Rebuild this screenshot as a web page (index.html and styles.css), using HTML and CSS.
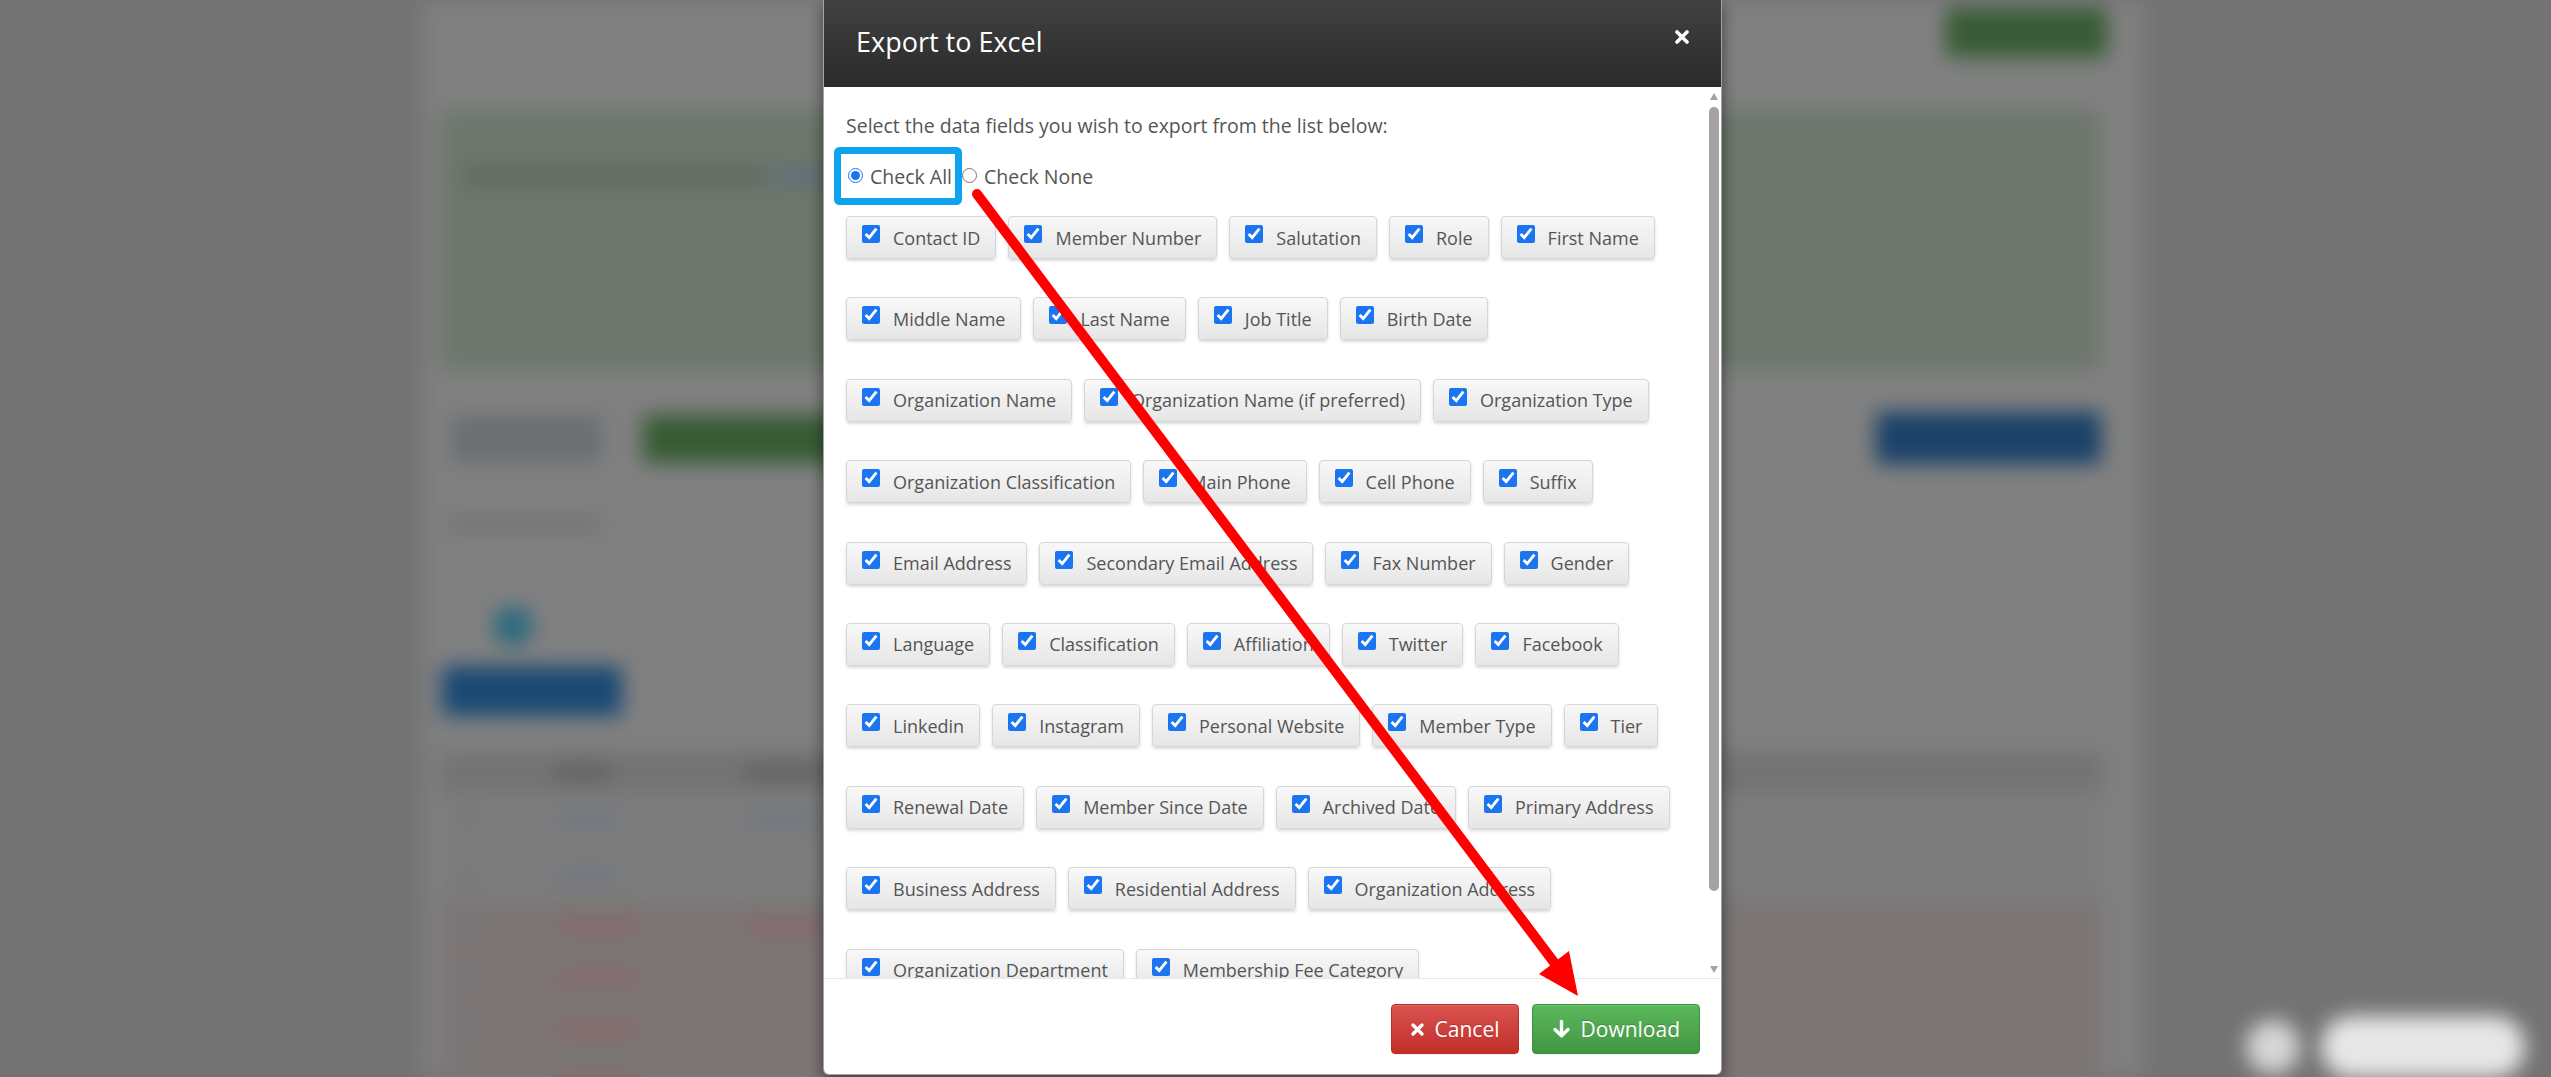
FILE: index.html
```html
<!DOCTYPE html>
<html lang="en">
<head>
    <meta charset="UTF-8">
    <meta name="viewport" content="width=device-width, initial-scale=1.0">
    <title>Export to Excel</title>
    <link rel="stylesheet" href="styles.css">
</head>
<body>
    <!-- page behind the dialog, blurred -->
    <div class="page">
        <div class="page-inner">
            <div class="top-bar"><span class="blob btn-green"></span></div>

            <div class="notice">
                <div class="notice-text">
                    <span class="blob text-dark"></span>
                    <span class="blob text-link"></span>
                </div>
                <div class="blob bar-blue bar-wide"></div>
                <div class="blob bar-blue bar-short"></div>
            </div>

            <div class="action-row">
                <span class="blob btn-grey"></span>
                <span class="blob btn-green btn-long"></span>
                <span class="blob btn-blue btn-right"></span>
            </div>

            <div class="blob small-text"></div>

            <div class="tabs"><span class="blob tab-dot"></span></div>
            <div class="blob btn-blue tab-btn"></div>

            <div class="table">
                <div class="row head">
                    <span></span>
                    <span class="blob cell-head"></span>
                    <span class="blob cell-head wide"></span>
                </div>
                <div class="row tall">
                    <span class="blob cell-id"></span>
                    <span class="blob cell-link"></span>
                    <span class="blob cell-link wide"></span>
                </div>
                <div class="row">
                    <span class="blob cell-id"></span>
                    <span class="blob cell-link"></span>
                    <span></span>
                </div>
                <div class="row danger">
                    <span class="blob cell-id"></span>
                    <span class="blob cell-red"></span>
                    <span class="blob cell-red wide"></span>
                </div>
                <div class="row danger">
                    <span class="blob cell-id"></span>
                    <span class="blob cell-red"></span>
                    <span></span>
                </div>
                <div class="row danger">
                    <span class="blob cell-id"></span>
                    <span class="blob cell-red"></span>
                    <span></span>
                </div>
                <div class="row danger">
                    <span class="blob cell-id"></span>
                    <span class="blob cell-red"></span>
                    <span></span>
                </div>
            </div>
        </div>

        <div class="chat-widget">
            <span class="chat-dot"></span>
            <span class="chat-pill"></span>
        </div>
    </div>

    <!-- export dialog -->
    <div class="modal">
        <div class="modal-header">
            <h3 class="modal-title">Export to Excel</h3>
            <button class="close" type="button">
                <svg width="14" height="14" viewBox="0 0 14 14"><path d="M2 2L12 12M12 2L2 12" stroke="#fff" stroke-width="3.6" stroke-linecap="round"/></svg>
            </button>
        </div>

        <div class="modal-main">
            <div class="modal-body">
                <p class="intro">Select the data fields you wish to export from the list below:</p>
                <div class="select-all">
                    <label><input type="radio" name="checkall" checked>Check All</label>
                    <label><input type="radio" name="checkall">Check None</label>
                </div>

                <div class="field-list">
                    <label class="field"><input type="checkbox" checked><span>Contact ID</span></label>
                    <label class="field"><input type="checkbox" checked><span>Member Number</span></label>
                    <label class="field"><input type="checkbox" checked><span>Salutation</span></label>
                    <label class="field"><input type="checkbox" checked><span>Role</span></label>
                    <label class="field"><input type="checkbox" checked><span>First Name</span></label>
                    <label class="field"><input type="checkbox" checked><span>Middle Name</span></label>
                    <label class="field"><input type="checkbox" checked><span>Last Name</span></label>
                    <label class="field"><input type="checkbox" checked><span>Job Title</span></label>
                    <label class="field"><input type="checkbox" checked><span>Birth Date</span></label>
                    <label class="field"><input type="checkbox" checked><span>Organization Name</span></label>
                    <label class="field"><input type="checkbox" checked><span>Organization Name (if preferred)</span></label>
                    <label class="field"><input type="checkbox" checked><span>Organization Type</span></label>
                    <label class="field"><input type="checkbox" checked><span>Organization Classification</span></label>
                    <label class="field"><input type="checkbox" checked><span>Main Phone</span></label>
                    <label class="field"><input type="checkbox" checked><span>Cell Phone</span></label>
                    <label class="field"><input type="checkbox" checked><span>Suffix</span></label>
                    <label class="field"><input type="checkbox" checked><span>Email Address</span></label>
                    <label class="field"><input type="checkbox" checked><span>Secondary Email Address</span></label>
                    <label class="field"><input type="checkbox" checked><span>Fax Number</span></label>
                    <label class="field"><input type="checkbox" checked><span>Gender</span></label>
                    <label class="field"><input type="checkbox" checked><span>Language</span></label>
                    <label class="field"><input type="checkbox" checked><span>Classification</span></label>
                    <label class="field"><input type="checkbox" checked><span>Affiliation</span></label>
                    <label class="field"><input type="checkbox" checked><span>Twitter</span></label>
                    <label class="field"><input type="checkbox" checked><span>Facebook</span></label>
                    <label class="field"><input type="checkbox" checked><span>Linkedin</span></label>
                    <label class="field"><input type="checkbox" checked><span>Instagram</span></label>
                    <label class="field"><input type="checkbox" checked><span>Personal Website</span></label>
                    <label class="field"><input type="checkbox" checked><span>Member Type</span></label>
                    <label class="field"><input type="checkbox" checked><span>Tier</span></label>
                    <label class="field"><input type="checkbox" checked><span>Renewal Date</span></label>
                    <label class="field"><input type="checkbox" checked><span>Member Since Date</span></label>
                    <label class="field"><input type="checkbox" checked><span>Archived Date</span></label>
                    <label class="field"><input type="checkbox" checked><span>Primary Address</span></label>
                    <label class="field"><input type="checkbox" checked><span>Business Address</span></label>
                    <label class="field"><input type="checkbox" checked><span>Residential Address</span></label>
                    <label class="field"><input type="checkbox" checked><span>Organization Address</span></label>
                    <label class="field"><input type="checkbox" checked><span>Organization Department</span></label>
                    <label class="field"><input type="checkbox" checked><span>Membership Fee Category</span></label>
                </div>
            </div>

            <!-- scrollbar as drawn by the browser -->
            <div class="scrollbar">
                <span class="arrow-up"></span>
                <span class="thumb"></span>
                <span class="arrow-down"></span>
            </div>
        </div>

        <div class="modal-footer">
            <button class="btn btn-danger" type="button">
                <svg width="15" height="15" viewBox="0 0 15 15"><path d="M3 3L12 12M12 3L3 12" stroke="#fff" stroke-width="3.4" stroke-linecap="round"/></svg>
                Cancel
            </button>
            <button class="btn btn-success" type="button">
                <svg width="19" height="20" viewBox="0 0 19 20"><path d="M9.5 2.5V16.5M3 10.5L9.5 16.8L16 10.5" fill="none" stroke="#fff" stroke-width="3.4" stroke-linecap="round" stroke-linejoin="round"/></svg>
                Download
            </button>
        </div>
    </div>

    <!-- screenshot annotations -->
    <svg class="annotations" width="2551" height="1077" viewBox="0 0 2551 1077">
        <rect x="837.5" y="150.5" width="121" height="51" rx="2" fill="none" stroke="#0fa2ee" stroke-width="7"/>
        <line x1="977" y1="194" x2="1556" y2="965" stroke="#ff0000" stroke-width="10" stroke-linecap="round"/>
        <polygon points="1578,996 1539,974 1569,951" fill="#ff0000"/>
    </svg>
</body>
</html>
```

FILE: styles.css
```css
body {
    margin: 0;
    width: 2551px;
    height: 1077px;
    overflow: hidden;
    position: relative;
    background: #737373;
    font-family: "Open Sans", "Liberation Sans", sans-serif;
}

/* ---------- blurred page behind the overlay ---------- */
.page {
    position: relative;
    height: 1077px;
    filter: blur(10px);
}
.page-inner {
    width: 1721px;
    height: 1077px;
    margin-left: 423px;
    padding-top: 8px;
    box-sizing: border-box;
    background: #808080;
}
.blob {
    display: block;
    border-radius: 4px;
}
.top-bar {
    display: flex;
    justify-content: flex-end;
    padding-right: 37px;
}
.btn-green { width: 161px; height: 49px; background: #375c34; }
.btn-blue { background: #1b4269; }
.btn-grey { width: 151px; height: 48px; background: #6b6f73; }

.notice {
    margin: 53px 44px 0 17px;
    padding: 58px 0 46px 20px;
    background: #6d776c;
    border-radius: 4px;
}
.notice-text {
    display: flex;
    gap: 6px;
    margin-left: 5px;
}
.text-dark { width: 300px; height: 16px; background: #5f675e; }
.text-link { width: 80px; height: 16px; background: #5e6e78; }
.bar-wide { width: 1492px; height: 47px; margin-top: 37px; }
.bar-short { width: 1140px; height: 42px; margin-top: 14px; }

.action-row {
    display: flex;
    gap: 41px;
    margin: 45px 43px 0 28px;
}
.btn-long { width: 360px; height: 48px; }
.btn-right { width: 225px; height: 52px; margin-left: auto; margin-top: -3px; }

.small-text {
    width: 155px;
    height: 16px;
    margin: 52px 0 0 24px;
    background: #747474;
}
.tabs { margin-top: 74px; padding-left: 70px; }
.tab-dot { width: 40px; height: 40px; border-radius: 50%; background: #2d6a7f; }
.tab-btn { width: 180px; height: 50px; margin: 20px 0 0 19px; background: #1a4a74; }

.table { margin: 36px 42px 0 17px; }
.row {
    display: grid;
    grid-template-columns: 100px 190px 1fr;
    align-items: center;
    height: 51px;
    border-bottom: 1px solid #777;
    background: #7d7d7d;
}
.row > span { margin-left: 15px; }
.row.head { height: 40px; background: #737373; }
.row.tall { height: 54px; }
.row.danger { background: #7c7575; }
.cell-head { width: 55px; height: 14px; background: #5f5f5f; }
.cell-head.wide { width: 75px; }
.cell-id { width: 26px; height: 12px; background: #76777b; }
.cell-link { width: 64px; height: 14px; background: #6f7681; }
.cell-link.wide { width: 80px; }
.cell-red { width: 85px; height: 14px; background: #886868; }
.cell-red.wide { width: 80px; }

.chat-widget {
    position: absolute;
    top: 1016px;
    right: 26px;
    display: flex;
    align-items: center;
    gap: 21px;
}
.chat-dot { width: 54px; height: 54px; border-radius: 50%; background: #d6d6d6; }
.chat-pill { width: 204px; height: 62px; border-radius: 31px; background: #e7e7e7; }

/* ---------- modal ---------- */
.modal {
    position: absolute;
    top: 0;
    left: 823px;
    width: 899px;
    height: 1075px;
    box-sizing: border-box;
    display: flex;
    flex-direction: column;
    background: #fff;
    border: 1px solid rgba(0, 0, 0, 0.35);
    border-top: 0;
    border-radius: 0 0 6px 6px;
    box-shadow: 0 5px 15px rgba(0, 0, 0, 0.5);
    overflow: hidden;
}
.modal-header {
    display: flex;
    justify-content: space-between;
    align-items: flex-start;
    height: 87px;
    box-sizing: border-box;
    padding: 24px 32px 0 32px;
    background: linear-gradient(#414141, #2a2a2a);
    flex-shrink: 0;
}
.modal-title {
    margin: 0;
    color: #fff;
    font-size: 27px;
    font-weight: 400;
    line-height: 36px;
}
.close {
    margin-top: 6px;
    padding: 0;
    border: 0;
    background: none;
    line-height: 0;
}

.modal-main {
    flex: 1;
    min-height: 0;
    display: flex;
}
.modal-body {
    flex: 1;
    overflow: hidden;
    padding: 26px 10px 28px 22px;
    color: #555;
    font-size: 19.5px;
    line-height: 26px;
}

.scrollbar {
    width: 15px;
    display: flex;
    flex-direction: column;
    align-items: center;
    padding: 6px 0 5px;
    box-sizing: border-box;
    flex-shrink: 0;
}
.arrow-up,
.arrow-down {
    width: 0;
    height: 0;
    border-left: 4px solid transparent;
    border-right: 4px solid transparent;
}
.arrow-up { border-bottom: 7px solid #a3a3a3; }
.arrow-down { margin-top: auto; border-top: 7px solid #a3a3a3; }
.thumb {
    width: 10px;
    height: 784px;
    margin-top: 7px;
    border-radius: 5px;
    background: #a3a3a3;
}

.intro { margin: 0; }
.select-all {
    display: flex;
    gap: 8px;
    margin-top: 25px;
}
.select-all label {
    display: inline-flex;
    align-items: center;
    gap: 7px;
}
.select-all input {
    width: 15px;
    height: 15px;
    margin: 0 0 4px 2px;
    accent-color: #1b75f0;
}

.field-list {
    display: flex;
    flex-wrap: wrap;
    column-gap: 12px;
    margin-top: 26px;
    font-size: 18px;
}
.field {
    display: inline-flex;
    align-items: center;
    height: 43px;
    box-sizing: border-box;
    margin-bottom: 38.4px;
    padding: 0 15px;
    background: linear-gradient(#f8f8f8, #e6e6e6);
    border: 1px solid #d6d6d6;
    border-radius: 4px;
    box-shadow: 0 2px 3px rgba(0, 0, 0, 0.14);
    white-space: nowrap;
}
.field input {
    width: 18px;
    height: 18px;
    margin: 0 13px 7px 0;
    accent-color: #1b75f0;
}

.modal-footer {
    display: flex;
    justify-content: flex-end;
    align-items: flex-start;
    gap: 13px;
    height: 96px;
    box-sizing: border-box;
    padding: 25px 21px 0 0;
    border-top: 1px solid #e8e8e8;
    flex-shrink: 0;
}
.btn {
    display: inline-flex;
    align-items: center;
    gap: 10px;
    height: 50px;
    box-sizing: border-box;
    padding: 0 18px;
    border: 1px solid transparent;
    border-radius: 4px;
    color: #fff;
    font-family: inherit;
    font-size: 21px;
    text-shadow: 0 -1px 0 rgba(0, 0, 0, 0.2);
    box-shadow: inset 0 1px 0 rgba(255, 255, 255, 0.15), 0 1px 1px rgba(0, 0, 0, 0.075);
}
.btn-danger {
    background: linear-gradient(#d9534f, #c12e2a);
    border-color: #b92c28;
}
.btn-success {
    padding: 0 19px;
    background: linear-gradient(#5cb85c, #419641);
    border-color: #3e8f3e;
}

/* ---------- annotations ---------- */
.annotations {
    position: absolute;
    top: 0;
    left: 0;
    pointer-events: none;
}
```
